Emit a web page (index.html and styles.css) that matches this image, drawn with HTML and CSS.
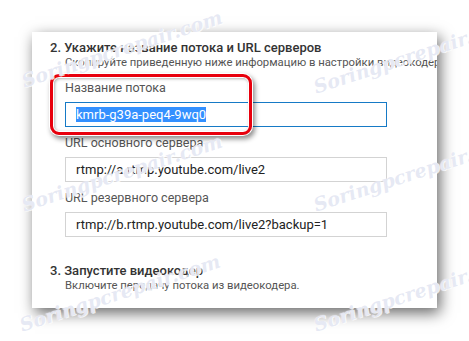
FILE: index.html
```html
<!DOCTYPE html>
<html lang="ru">
<head>
  <meta charset="UTF-8" />
  <title>Настройки видеокодера</title>
  <link rel="stylesheet" href="styles.css">
</head>
<body>
  <!-- Encoder settings card -->
  <div class="card">
    <div class="step">
      <h2>2. Укажите название потока и URL серверов</h2>
      <p>Скопируйте приведенную ниже информацию в настройки видеокодера.</p>
    </div>

    <div class="fields">
      <div class="field">
        <label>Название потока</label>
        <div class="input focused"><span class="selected">kmrb-g39a-peq4-9wq0</span></div>
      </div>
      <div class="field">
        <label>URL основного сервера</label>
        <div class="input">rtmp://a.rtmp.youtube.com/live2</div>
      </div>
      <div class="field">
        <label>URL резервного сервера</label>
        <div class="input">rtmp://b.rtmp.youtube.com/live2?backup=1</div>
      </div>
    </div>

    <div class="step step-last">
      <h2>3. Запустите видеокодер</h2>
      <p>Включите передачу потока из видеокодера.</p>
    </div>

    <!-- Highlight frame -->
    <div class="highlight"></div>
  </div>

  <!-- Watermarks -->
  <div class="wm wm-1">Soringpcrepair.com</div>
  <div class="wm wm-2">Soringpcrepair.com</div>
  <div class="wm wm-3">Soringpcrepair.com</div>
  <div class="wm wm-4">Soringpcrepair.com</div>
  <div class="wm wm-5">Soringpcrepair.com</div>
  <div class="wm wm-6">Soringpcrepair.com</div>
</body>
</html>
```

FILE: styles.css
```css
/* Base */
* {
  margin: 0;
  padding: 0;
  box-sizing: border-box;
}
body {
  background: #fff;
  font-family: Roboto, "Noto Sans", Arial, sans-serif;
  width: 469px;
  height: 341px;
  overflow: hidden;
  position: relative;
  padding: 32px 0 0 32px;
}
/* Card */
.card {
  position: relative;
  width: 405px;
  height: 276px;
  background: #fff;
  padding: 7px 0 0 18px;
  box-shadow: 3px 5px 14px rgba(0, 0, 0, 0.6);
  overflow: hidden;
}
.step h2 {
  font-size: 13px;
  font-weight: 500;
  color: #333;
  line-height: 17px;
  white-space: nowrap;
}
.step p {
  font-size: 11.3px;
  color: #555;
  line-height: 13px;
  padding-left: 15px;
  white-space: nowrap;
}
.step-last {
  margin-top: 25px;
}
/* Fields */
.fields {
  padding: 11px 0 0 15px;
  display: flex;
  flex-direction: column;
  gap: 8px;
}
.field label {
  display: block;
  font-size: 12.5px;
  color: #555;
  line-height: 15px;
  margin-bottom: 7px;
}
.input {
  width: 322px;
  height: 25px;
  border: 1px solid #d3d3d3;
  padding: 0 10px;
  font-size: 13px;
  line-height: 23px;
  color: #222;
  white-space: nowrap;
}
.input.focused {
  border-color: #167ac6;
}
.selected {
  background: #3390ff;
  color: #fff;
}
/* Red frame over the stream name */
.highlight {
  position: absolute;
  left: 18px;
  top: 42px;
  width: 202px;
  height: 61px;
  border: 3px solid #e8000d;
  border-radius: 9px;
  box-shadow: 0 0 0 1px #fff, 2px 3px 5px 1px rgba(0, 0, 0, 0.45), inset 0 0 0 1px #fff, inset 1px 1px 3px 1px rgba(0, 0, 0, 0.3);
}
/* Watermarks */
.wm {
  position: absolute;
  font-family: "DejaVu Serif", serif;
  font-style: italic;
  font-weight: bold;
  font-size: 19px;
  color: rgba(200, 206, 230, 0.45);
  text-shadow: 0 0 1px #fff, 1px 1px 0 rgba(255, 255, 255, 0.8);
  transform: rotate(-18deg);
  transform-origin: left center;
  white-space: nowrap;
  pointer-events: none;
}
.wm-1 { left: 22px; top: 70px; }
.wm-2 { left: 314px; top: 76px; }
.wm-3 { left: 22px; top: 194px; }
.wm-4 { left: 314px; top: 194px; }
.wm-5 { left: 20px; top: 314px; }
.wm-6 { left: 314px; top: 314px; }
```
